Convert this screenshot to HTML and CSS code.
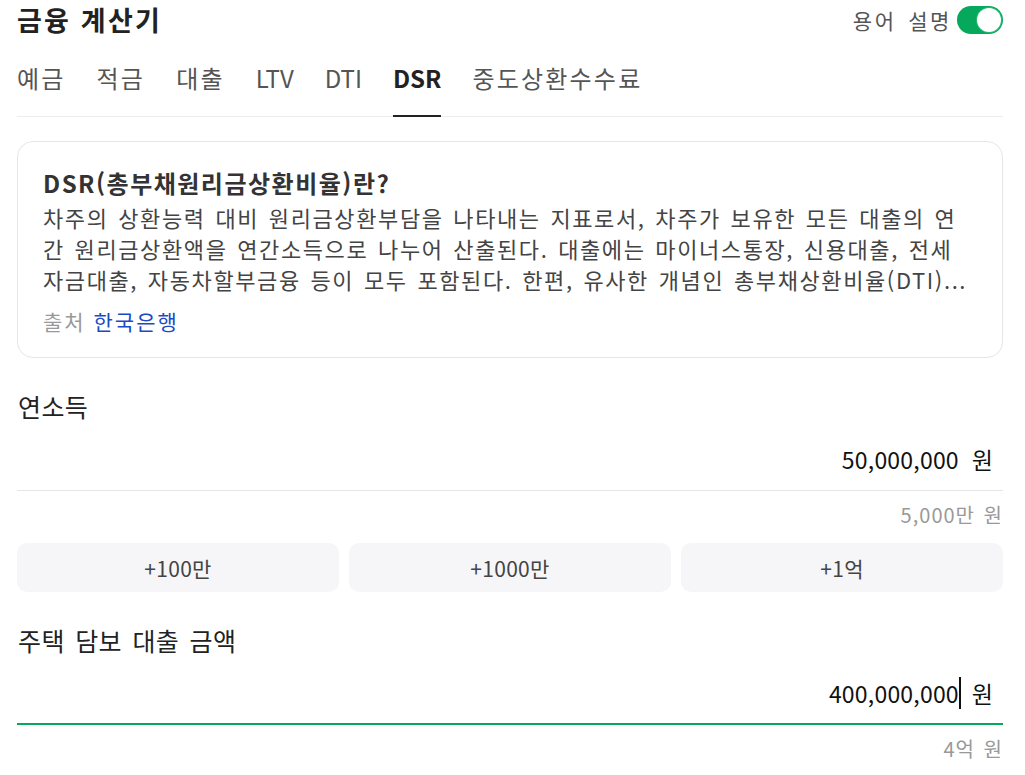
FILE: index.html
```html
<!DOCTYPE html>
<html lang="ko">
<head>
<meta charset="utf-8">
<title>금융 계산기</title>
<link rel="stylesheet" href="styles.css">
</head>
<body>
<div class="app">
  <header class="header">
    <h1 class="title">금융 계산기</h1>
    <div class="glossary">
      <span class="glossary-label">용어 설명</span>
      <span class="switch is-on"><span class="switch-knob"></span></span>
    </div>
  </header>

  <nav class="tabs">
    <a class="tab">예금</a>
    <a class="tab">적금</a>
    <a class="tab">대출</a>
    <a class="tab tab--latin">LTV</a>
    <a class="tab tab--latin">DTI</a>
    <a class="tab tab--latin is-active">DSR</a>
    <a class="tab">중도상환수수료</a>
  </nav>

  <section class="term-card">
    <h2 class="term-title">DSR(총부채원리금상환비율)란?</h2>
    <p class="term-desc">차주의 상환능력 대비 원리금상환부담을 나타내는 지표로서, 차주가 보유한 모든 대출의 연간 원리금상환액을 연간소득으로 나누어 산출된다. 대출에는 마이너스통장, 신용대출, 전세자금대출, 자동차할부금융 등이 모두 포함된다. 한편, 유사한 개념인 총부채상환비율(DTI)...</p>
    <p class="term-source">출처 <a class="term-link">한국은행</a></p>
  </section>

  <div class="field">
    <label class="field-label">연소득</label>
    <div class="field-input">
      <span class="field-value">50,000,000</span>
      <span class="field-unit">원</span>
    </div>
    <div class="field-hint">5,000만 원</div>
    <div class="quick-add">
      <button class="quick-btn">+100만</button>
      <button class="quick-btn">+1000만</button>
      <button class="quick-btn">+1억</button>
    </div>
  </div>

  <div class="field">
    <label class="field-label">주택 담보 대출 금액</label>
    <div class="field-input is-focused">
      <span class="field-value">400,000,000</span><span class="caret"></span>
      <span class="field-unit">원</span>
    </div>
    <div class="field-hint">4억 원</div>
  </div>
</div>
</body>
</html>
```

FILE: styles.css
```css
* {
  box-sizing: border-box;
}

html, body {
  margin: 0;
  padding: 0;
  background: #fff;
}

body {
  font-family: "Noto Sans CJK KR", "Noto Sans", sans-serif;
  color: #222;
}

.app {
  padding: 0 22px 0 17px;
}

/* header */
.header {
  display: flex;
  justify-content: space-between;
  align-items: center;
  height: 40px;
}

.title {
  margin: 0;
  font-size: 27px;
  font-weight: 700;
  line-height: 36px;
  letter-spacing: 2.2px;
  color: #222;
}

.glossary {
  display: flex;
  align-items: center;
  gap: 5px;
}

.glossary-label {
  font-size: 21px;
  line-height: 28px;
  letter-spacing: 2.6px;
  word-spacing: 3px;
  color: #555;
}

.switch {
  position: relative;
  display: inline-block;
  width: 46px;
  height: 28px;
  border-radius: 14px;
  background: #ccc;
}

.switch.is-on {
  background: #06a85b;
}

.switch-knob {
  position: absolute;
  top: 2px;
  right: 2px;
  width: 24px;
  height: 24px;
  border-radius: 50%;
  background: #fff;
  box-shadow: 0 0 0 1px #2bb874;
}

/* tabs */
.tabs {
  display: flex;
  gap: 31px;
  padding-top: 22px;
  border-bottom: 1px solid #ececec;
}

.tab {
  position: relative;
  font-size: 24px;
  line-height: 32px;
  letter-spacing: 2.2px;
  padding-bottom: 22px;
  color: #555;
  cursor: pointer;
}

.tab--latin {
  letter-spacing: 0;
}

.tab.is-active {
  color: #222;
  font-weight: 700;
}

.tab.is-active::after {
  content: "";
  position: absolute;
  left: 0;
  right: 0;
  bottom: -1px;
  height: 2px;
  background: #222;
}

/* glossary card */
.term-card {
  margin-top: 24px;
  border: 1px solid #e6e6e6;
  border-radius: 16px;
  padding: 26px 33px 22px 25px;
}

.term-title {
  margin: 0 0 4px;
  font-size: 24px;
  font-weight: 700;
  line-height: 30px;
  letter-spacing: 1.5px;
  color: #333;
  white-space: nowrap;
}

.term-desc {
  margin: 0;
  font-size: 22px;
  line-height: 31px;
  letter-spacing: 1.6px;
  word-spacing: 2px;
  color: #444;
  word-break: break-all;
}

.term-source {
  margin: 12px 0 0;
  font-size: 21px;
  line-height: 28px;
  letter-spacing: 2px;
  color: #999;
}

.term-link {
  color: #1a4bc4;
}

/* input fields */
.field {
  margin-top: 33px;
}

.field-label {
  display: block;
  padding-left: 1px;
  font-size: 25px;
  line-height: 30px;
  letter-spacing: 0.4px;
  word-spacing: 3px;
  color: #222;
}

.field-input {
  display: flex;
  justify-content: flex-end;
  align-items: center;
  padding: 21px 10px 14px 0;
  border-bottom: 1px solid #e6e6e6;
}

.field-input.is-focused {
  padding-bottom: 13px;
  border-bottom: 2px solid #06a85b;
}

.field-value {
  font-size: 23px;
  line-height: 34px;
  letter-spacing: 0.2px;
  color: #111;
}

.caret {
  display: inline-block;
  width: 2px;
  height: 32px;
  background: #111;
}

.field-unit {
  margin-left: 13px;
  font-size: 23px;
  line-height: 34px;
  color: #111;
}

.field-input.is-focused .field-unit {
  margin-left: 11px;
}

.field-hint {
  margin-top: 10px;
  text-align: right;
  font-size: 20px;
  line-height: 28px;
  letter-spacing: 1px;
  word-spacing: 2px;
  color: #999;
}

.quick-add {
  display: grid;
  grid-template-columns: repeat(3, 1fr);
  gap: 10px;
  margin-top: 14px;
}

.quick-btn {
  height: 49px;
  border: 0;
  border-radius: 10px;
  background: #f6f6f8;
  font-family: inherit;
  font-size: 21px;
  letter-spacing: 0.3px;
  color: #444;
  cursor: pointer;
}
```
